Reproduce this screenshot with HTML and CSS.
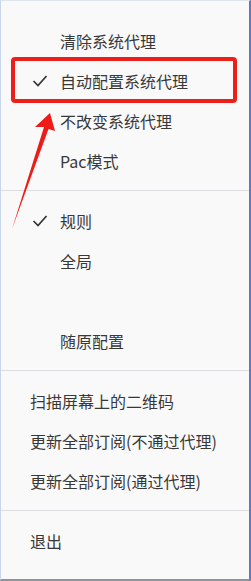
FILE: index.html
```html
<!DOCTYPE html>
<html>
	<head>
		<meta charset="UTF-8">
		<title></title>
		<link rel="stylesheet" href="styles.css">
	</head>
	<body>
		<div class="menu">
			<ul class="group">
				<li class="item"><span class="check"></span>清除系统代理</li>
				<li class="item"><span class="check"><svg width="16" height="14" viewBox="0 0 16 14"><polyline points="1.5,7 6,11.5 14.5,2" /></svg></span>自动配置系统代理</li>
				<li class="item"><span class="check"></span>不改变系统代理</li>
				<li class="item"><span class="check"></span>Pac模式</li>
			</ul>
			<div class="sep"></div>
			<ul class="group">
				<li class="item"><span class="check"><svg width="16" height="14" viewBox="0 0 16 14"><polyline points="1.5,7 6,11.5 14.5,2" /></svg></span>规则</li>
				<li class="item"><span class="check"></span>全局</li>
				<li class="item"><span class="check"></span></li>
				<li class="item"><span class="check"></span>随原配置</li>
			</ul>
			<div class="sep"></div>
			<ul class="group plain">
				<li class="item">扫描屏幕上的二维码</li>
				<li class="item">更新全部订阅(不通过代理)</li>
				<li class="item">更新全部订阅(通过代理)</li>
			</ul>
			<div class="sep"></div>
			<ul class="group plain">
				<li class="item">退出</li>
			</ul>

			<div class="mark"></div>
			<svg class="arrow" width="60" height="130" viewBox="0 0 60 130">
				<polygon points="50,13 55,31 48.5,29 12,129 44,27 35,27" />
			</svg>
		</div>
	</body>
</html>
```

FILE: styles.css
```css
* {
	margin:0;
	padding:0;
}
body {
	background:#fff;
}
li {
	list-style:none;
}
.menu {
	position:relative;
	box-sizing:border-box;
	width:251px;
	height:581px;
	padding-top:20px;
	background:#f9f9fa;
	border-top:1px solid #dfe5ee;
	border-left:1px solid #c9d5ea;
	border-right:2px solid #5a7cc0;
	border-bottom:2px solid #8f949c;
	font-family:"Microsoft YaHei","Noto Sans CJK SC",sans-serif;
	font-size:16px;
	color:#383838;
}
	.item {
		display:flex;
		align-items:center;
		height:40px;
		padding-left:29px;
		white-space:nowrap;
	}
	.check {
		display:flex;
		align-items:center;
		width:30px;
		height:40px;
	}
		.check svg {
			margin-left:2px;
			fill:none;
			stroke:#333;
			stroke-width:1.7;
		}
	.sep {
		height:1px;
		margin:9px 0 10px;
		background:#dcdde0;
	}
	.mark {
		position:absolute;
		left:10px;
		top:56px;
		width:218px;
		height:38px;
		border:4px solid #ec1f1b;
		border-radius:4px;
	}
	.arrow {
		position:absolute;
		left:-1px;
		top:99px;
		fill:#ee1c18;
	}
```
